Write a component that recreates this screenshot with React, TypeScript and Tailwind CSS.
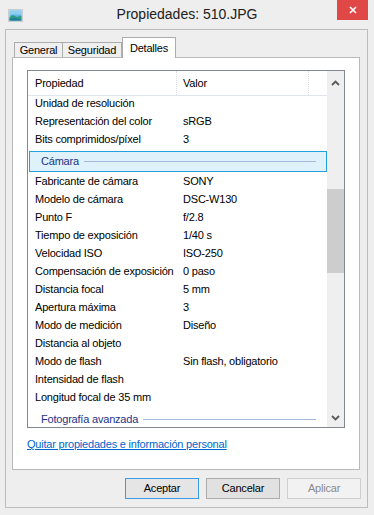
import React from 'react';

const topRows: [string, string][] = [
  ['Unidad de resolución', ''],
  ['Representación del color', 'sRGB'],
  ['Bits comprimidos/píxel', '3'],
];

const cameraRows: [string, string][] = [
  ['Fabricante de cámara', 'SONY'],
  ['Modelo de cámara', 'DSC-W130'],
  ['Punto F', 'f/2.8'],
  ['Tiempo de exposición', '1/40 s'],
  ['Velocidad ISO', 'ISO-250'],
  ['Compensación de exposición', '0 paso'],
  ['Distancia focal', '5 mm'],
  ['Apertura máxima', '3'],
  ['Modo de medición', 'Diseño'],
  ['Distancia al objeto', ''],
  ['Modo de flash', 'Sin flash, obligatorio'],
  ['Intensidad de flash', ''],
  ['Longitud focal de 35 mm', ''],
];

function Row({ name, value }: { name: string; value: string }) {
  return (
    <div className="flex h-[18px] shrink-0 leading-[14px] text-black">
      <span className="w-[149px] shrink-0 whitespace-nowrap pl-[7px]">{name}</span>
      <span className="whitespace-nowrap pl-[6px]">{value}</span>
    </div>
  );
}

function Group({ label, selected }: { label: string; selected?: boolean }) {
  return (
    <div
      className={
        'ml-[1px] mt-[1px] mb-[2px] flex h-[21px] shrink-0 items-center border pl-[11px] pr-[10px] ' +
        (selected ? 'border-[#26a0da] bg-[#dff2fb]' : 'border-transparent')
      }
    >
      <span className="whitespace-nowrap text-[#1e3287]">{label}</span>
      <div className="ml-[5px] h-0 flex-1 border-t border-[#a5b9dd]" />
    </div>
  );
}

function Chevron({ up }: { up?: boolean }) {
  return (
    <svg width="9" height="6" viewBox="0 0 9 6">
      <polyline
        points={up ? '1,5 4.5,1.5 8,5' : '1,1 4.5,4.5 8,1'}
        fill="none"
        stroke="#5a5a5a"
        strokeWidth="1.8"
      />
    </svg>
  );
}

export default function App() {
  return (
    <div
      className="h-[515px] w-[374px] overflow-hidden bg-[#eeeeee] text-[11px] tracking-[-0.2px] antialiased"
      style={{ fontFamily: "'Liberation Sans', Arial, sans-serif" }}
    >
      {/* title bar */}
      <div className="grid h-[29px] grid-cols-[1fr_auto_1fr]">
        <div className="pl-[8px] pt-[9px]">
          <svg width="15" height="13" viewBox="0 0 15 13">
            <rect x="0.5" y="0.5" width="14" height="12" fill="#f4f7f9" stroke="#c8ccd0" />
            <rect x="1.5" y="1.5" width="12" height="10" fill="#5fb8e8" />
            <rect x="1.5" y="1.5" width="12" height="4" fill="#8fd0f2" />
            <path d="M1.5 8 L5 6 L9 8 L13.5 6.5 L13.5 11.5 L1.5 11.5 Z" fill="#2e9c84" />
            <path d="M1.5 10 L7 9 L13.5 10.5 L13.5 11.5 L1.5 11.5 Z" fill="#1f7b9e" />
          </svg>
        </div>
        <div className="pt-[6px] text-[14px] leading-[16px] tracking-normal text-[#202020]">Propiedades: 510.JPG</div>
        <div className="flex justify-end pr-[6px]">
          <div className="flex h-[20px] w-[31px] items-center justify-center bg-[#e04848]">
            <svg width="8" height="8" viewBox="0 0 8 8">
              <path d="M1 1 L7 7 M7 1 L1 7" stroke="#ffffff" strokeWidth="1.6" />
            </svg>
          </div>
        </div>
      </div>

      {/* client frame */}
      <div className="ml-[5px] flex h-[479px] w-[363px] flex-col border border-[#bdbdbd] px-[6px] pt-[7px]">
        {/* tabs */}
        <div className="relative z-10 flex h-[20px] items-end pl-[2px]">
          <div className="flex h-[15px] w-[49px] items-center justify-center border border-b-0 border-[#acacac] bg-[#efefef] leading-[14px] text-black">
            General
          </div>
          <div className="flex h-[15px] w-[59px] items-center justify-center border border-b-0 border-l-0 border-[#acacac] bg-[#efefef] leading-[14px] text-black">
            Seguridad
          </div>
          <div className="-mb-px flex h-[21px] w-[54px] items-start justify-center border border-b-0 border-[#acacac] bg-white pt-[3px] leading-[14px] text-black">
            Detalles
          </div>
        </div>

        {/* panel */}
        <div className="flex h-[413px] w-[348px] shrink-0 flex-col border border-[#b9b9b9] bg-white pl-[14px] pt-[12px]">
          <div className="flex h-[358px] w-[318px] border border-[#828790]">
            <div className="flex w-[299px] flex-col overflow-hidden">
              <div className="flex h-[25px] shrink-0 items-center border-b border-[#dfe6ee] text-black">
                <span className="flex h-full w-[149px] items-center border-r border-dotted border-[#dcdce6] pl-[7px]">
                  Propiedad
                </span>
                <span className="flex h-full w-[132px] items-center border-r border-dotted border-[#dcdce6] pl-[6px]">
                  Valor
                </span>
              </div>
              {topRows.map(([n, v]) => (
                <Row key={n} name={n} value={v} />
              ))}
              <Group label="Cámara" selected />
              {cameraRows.map(([n, v]) => (
                <Row key={n} name={n} value={v} />
              ))}
              <Group label="Fotografía avanzada" />
            </div>
            <div className="flex w-[17px] flex-col bg-[#efefef]">
              <div className="flex h-[17px] shrink-0 items-end justify-center pb-[2px]">
                <Chevron up />
              </div>
              <div className="mt-[101px] h-[84px] bg-[#cdcdcd]" />
              <div className="flex-1" />
              <div className="flex h-[17px] shrink-0 items-center justify-center pb-[1px]">
                <Chevron />
              </div>
            </div>
          </div>
          <div className="mt-[9px] leading-[14px]">
            <span className="text-[#0066cc] underline">Quitar propiedades e información personal</span>
          </div>
        </div>

        {/* buttons */}
        <div className="mt-[8px] flex justify-end gap-[7px]">
          <div className="flex h-[21px] w-[74px] items-center justify-center border border-[#3c9be6] bg-[#e5e5e5] text-black">
            Aceptar
          </div>
          <div className="flex h-[21px] w-[74px] items-center justify-center border border-[#adadad] bg-[#e1e1e1] text-black">
            Cancelar
          </div>
          <div className="flex h-[21px] w-[74px] items-center justify-center border border-[#cfcfcf] bg-[#f2f2f2] text-[#8a8a8a]">
            Aplicar
          </div>
        </div>
      </div>
    </div>
  );
}
